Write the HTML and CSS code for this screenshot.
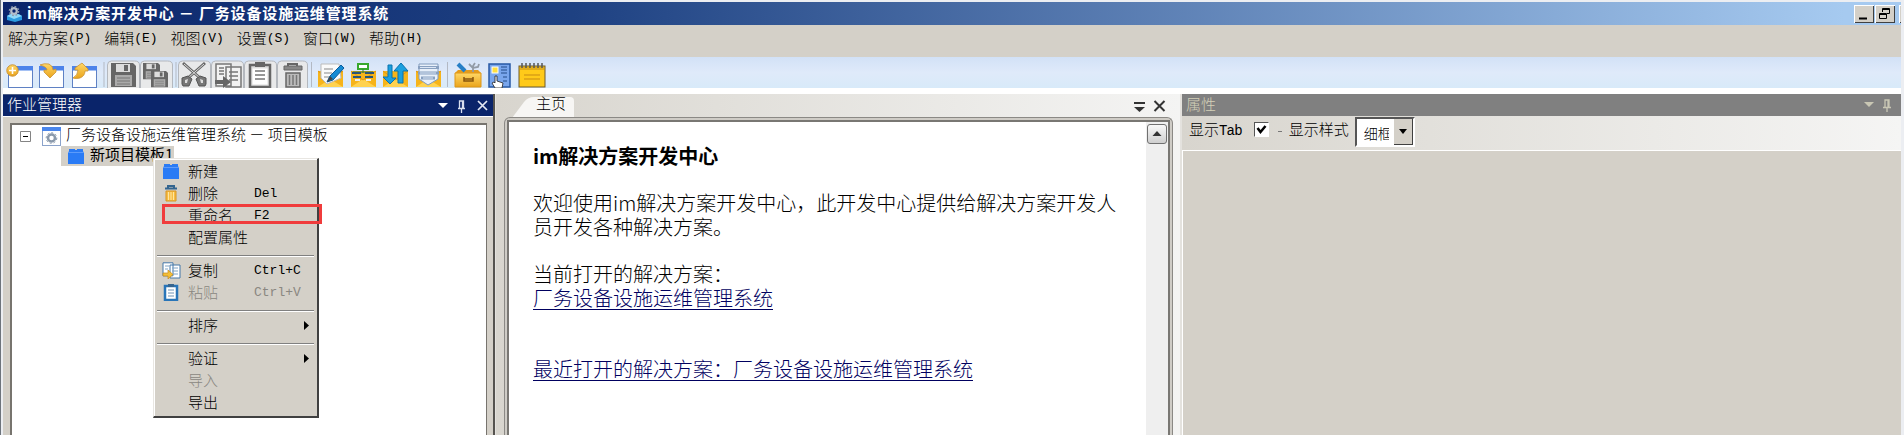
FILE: index.html
```html
<!DOCTYPE html>
<html lang="zh-CN">
<head>
<meta charset="utf-8">
<title>im解决方案开发中心</title>
<link rel="stylesheet" href="styles.css">
</head>
<body>
<div class="window">
  <header class="titlebar">
    <svg class="appicon" width="15" height="16" viewBox="0 0 15 16"><path d="M0 10l3-2h9l3 2v4l-7 2-8-2z" fill="#2b9be0"/><path d="M0 10l7 3 8-3-4-2H4z" fill="#8fd8f8"/><circle cx="7" cy="5" r="2.800" fill="none" stroke="#b4bdca" stroke-width="2.200"/><circle cx="7" cy="5" r="4.600" fill="none" stroke="#8d99aa" stroke-width="1.400" stroke-dasharray="1.800 1.800"/></svg>
    <span class="title-text">im解决方案开发中心 － 厂务设备设施运维管理系统</span>
    <div class="winbtns">
      <span class="winbtn"><svg width="20" height="18"><path d="M5 13.500h8" stroke="#000" stroke-width="2"/></svg></span>
      <span class="winbtn"><svg width="20" height="18" fill="none" stroke="#000"><path d="M7.500 7V3.500h7v5H12M7 4.500h8M4.500 8.500h7v5h-7zM4 9.500h8"/></svg></span>
      <span class="winbtn cut"></span>
    </div>
  </header>
  <nav class="menubar">
    <span class="mi">解决方案<i>(P)</i></span><span class="mi">编辑<i>(E)</i></span><span class="mi">视图<i>(V)</i></span><span class="mi">设置<i>(S)</i></span><span class="mi">窗口<i>(W)</i></span><span class="mi">帮助<i>(H)</i></span>
  </nav>
  <div class="toolbar">
    <svg class="tools" width="560" height="31" viewBox="0 57 560 31">
      <defs>
        <linearGradient id="gold" x1="0" y1="0" x2="0" y2="1"><stop offset="0" stop-color="#ffd766"/><stop offset="1" stop-color="#eaa41c"/></linearGradient>
        <g id="win"><rect x=".5" y=".5" width="24" height="21" fill="#fff" stroke="#5f81c4"/><rect x="0" y="0" width="25" height="4.500" fill="#4d83ea"/></g>
        <g id="floppy"><path d="M0 0h22l3 3v21H0z" fill="#666"/><rect x="5" y="1" width="14" height="8" fill="#ddd"/><rect x="13" y="2" width="4" height="6" fill="#666"/><rect x="4" y="12" width="17" height="11" fill="#aaa"/><path d="M6 15h13M6 18h13M6 21h13" stroke="#777"/></g>
        <g id="env"><path d="M0 8h25v16H0z" fill="#f6b41b"/><path d="M0 24l12-8 13 8z" fill="#ffd24f"/><path d="M0 8l12 9 13-9" fill="none" stroke="#df9413"/></g>
      </defs>
      <use href="#win" x="8" y="66"/><circle cx="12.500" cy="70.500" r="5.700" fill="url(#gold)" stroke="#c99235"/><path d="M12.500 67v7M9 70.500h7" stroke="#fff" stroke-width="1.600"/>
      <use href="#win" x="39" y="66"/><path d="M40 65q4-2 9-1 4 2 4 6l3-1v3l-6 6-6-6v-2h3q0-3-7-5z" fill="url(#gold)" stroke="#c99235" stroke-width=".8"/>
      <use href="#win" x="72" y="66"/><path d="M73 78q5-3 5-8h-3v-2l7-5 6 6v2h-3q0 5-5 7-4 1-7 0z" fill="url(#gold)" stroke="#c99235" stroke-width=".8"/>
      <path d="M104 62v25M176 62v25M311.500 62v25M447.500 62v25" stroke="#b3b9c3"/>
      <g fill="#e8e9ea" stroke="#b4b8be"><path d="M107.500 88V65q0-4 4-4h23q5 0 5 4v23"/><path d="M140.500 88V65q0-4 4-4h23q5 0 5 4v23"/><path d="M178.500 88V65q0-4 4-4h23q5 0 5 4v23"/><path d="M211.500 88V65q0-4 4-4h23q5 0 5 4v23"/><path d="M244.500 88V65q0-4 4-4h23q5 0 5 4v23"/><path d="M277.500 88V65q0-4 4-4h21q5 0 5 4v23"/></g>
      <use href="#floppy" x="111" y="63"/><g transform="translate(143 63) scale(.68)"><use href="#floppy"/></g><g transform="translate(151 71) scale(.68)"><use href="#floppy"/></g>
      <path d="M183 63l17 15M205 63l-17 15" stroke="#666" stroke-width="3"/><path d="M184 64l16 14M204 64l-16 14" stroke="#ddd"/><path d="M182 84v-6l6-2 4 3-3 7h-6zM206 84v-6l-6-2-4 3 3 7h6z" fill="#777" stroke="#555"/><path d="M185 83v-3l3-1-1 4zM203 83v-3l-3-1 1 4z" fill="#ddd"/>
      <g fill="#f2f2f2" stroke="#777" stroke-width="1.500"><path d="M216 64h15v22h-15zM226 67h15v20h-15z"/><path d="M219 68h5M219 71h5M219 74h5M229 72h9M229 76h9M229 80h9"/></g><path d="M215 80h8v-4l8 6-8 6v-4h-8z" fill="#666"/>
      <rect x="250" y="65" width="20" height="22" fill="#ddd" stroke="#666" stroke-width="2.500"/><rect x="255" y="62" width="10" height="5" fill="#666"/><path d="M252.500 68.500h15v16h-15z" fill="#fff"/><path d="M255 71h10M255 75h10M255 79h10" stroke="#777" stroke-width="1.500"/>
      <path d="M288 66v-2h9v2" fill="none" stroke="#666" stroke-width="2"/><path d="M284 66h18v4h-18z" fill="#888" stroke="#666"/><path d="M286 73h14v14h-14z" fill="#bbb" stroke="#666" stroke-width="1.500"/><path d="M289.500 75v10M293 75v10M296.500 75v10" stroke="#777" stroke-width="1.500"/>
      <use href="#env" x="318" y="63"/><path d="M321 64h18l2 14-14 6-6-6z" fill="#fafafa" stroke="#bbb"/><path d="M324 69h9M324 73h8M324 77h5" stroke="#888"/><path d="M327 82l3-6 11-11 3 3-11 12z" fill="#168bd4" stroke="#0b5c9c"/><path d="M327 82l6-3-3-3z" fill="#444"/>
      <use href="#env" x="351" y="63"/><path d="M358 64h10v5h-10z" fill="#fff" stroke="#38a82c" stroke-width="2"/><path d="M363 69v4M353 72h20" stroke="#3d7b35"/><path d="M352 73h9M365 73h9M353 77h8M365 77h8" stroke="#2a5576" stroke-width="2"/><path d="M355 80h5M366 80h5" stroke="#eee" stroke-width="2"/>
      <use href="#env" x="383" y="63"/><path d="M388 65h4v13h4l-6 6-7-7h5z" fill="#1ba0df" stroke="#0b72ad"/><path d="M398 83V71h-4l7-8 7 8h-5v12z" fill="#1ba0df" stroke="#0b72ad"/>
      <use href="#env" x="416" y="63"/><path d="M419 64h19v15l-10 6-9-6z" fill="#e8f0fa" stroke="#819bbd"/><path d="M418 67.500h21M418 73h21M421 78h14" stroke="#88a0c0" stroke-width="3"/><path d="M420 67.500h16M420 73h16M423 78h10" stroke="#dbe6f5"/>
      <path d="M455 73h26v14h-26z" fill="url(#gold)" stroke="#dd9619"/><path d="M455 73l3-3h20l3 3" fill="#e49b1b"/><path d="M464 77v4h9v-4M464 79h9" stroke="#88550d" stroke-width="1.500" fill="none"/><path d="M458 64l7 7" stroke="#267fc6" stroke-width="4"/><path d="M469 64l4 4v4M475 63l-2 3v2l5-1 1-3" stroke="#929ba6" stroke-width="1.800" fill="none"/>
      <rect x="489" y="64" width="21" height="23" fill="#79a6ed" stroke="#2758a4" stroke-width="1.500"/><rect x="492" y="67" width="6" height="6" fill="#ffdf3f" stroke="#fff"/><path d="M501 67h6M501 70h6M501 73h6M503 77h4M503 81h4" stroke="#244c8a"/><path d="M495 88l-3-5 2-1 1 1v-7h2v5l6 2-1 5z" fill="#fff" stroke="#222" stroke-width=".8"/>
      <rect x="519" y="66" width="26" height="21" fill="#ffca19" stroke="#6f5b2a"/><path d="M520 67h24v3h-24z" fill="#dfab1b"/><path d="M522 63v5M526 63v5M530 63v5M534 63v5M538 63v5M542 63v5" stroke="#555" stroke-width="1.500"/><path d="M524 75h16M524 79h16" stroke="#c78b15"/>
    </svg>
  </div>
  <main class="workspace">
    <section class="jobs">
      <div class="phead navy"><span>作业管理器</span>
        <svg width="60" height="22" viewBox="433 94 60 22"><path d="M438 102h10l-5 5z" fill="#fff"/><path d="M458 107.500h7M459.500 107v-7h4v7M462.500 100v7M461.500 108v4" stroke="#d9dfef" fill="none" stroke-width="1.300"/><path d="M478 100l9 9M487 100l-9 9" stroke="#e3e8f4" stroke-width="1.700"/></svg>
      </div>
      <div class="treewrap"><div class="tree">
        <div class="row">
          <svg class="exp" width="11" height="11"><path d="M.5.5h10v10H.5z" fill="#fff" stroke="#848484"/><path d="M3 5.500h5" stroke="#000"/></svg>
          <svg class="proj" width="19" height="19"><rect x=".5" y=".5" width="18" height="18" fill="#fff" stroke="#8ba3cb"/><path d="M0 0h19v4H0z" fill="#4a86ec"/><circle cx="9.500" cy="11" r="3.500" fill="none" stroke="#8a99ab" stroke-width="2.500"/><circle cx="9.500" cy="11" r="5.300" fill="none" stroke="#8a99ab" stroke-dasharray="2 2"/></svg>
          <span class="root">厂务设备设施运维管理系统 － 项目模板</span>
        </div>
        <div class="row2"><svg width="16" height="16"><path d="M1 3V1h6v1h2V1h6v2l1 2v11H0V5z" fill="#2a7bf5"/><path d="M0 4.500h16" stroke="#5c9bfa"/></svg><b>新项目模板1</b></div>
      </div></div>
    </section>
    <section class="doc">
      <div class="tabs">
        <svg class="tab" width="64" height="24" viewBox="0 0 64 24"><path d="M0 24L12 8q4-5 10-5h36q4 0 4 4v17z" fill="#f7f6f4"/></svg>
        <span class="tabname">主页</span>
        <svg class="tabctl" width="40" height="22" viewBox="1130 94 40 22"><path d="M1133 103h11" stroke="#333" stroke-width="2"/><path d="M1133 107h11l-5.500 5z" fill="#333"/><path d="M1153.500 101l10 10M1163.500 101l-10 10" stroke="#333" stroke-width="2"/></svg>
      </div>
      <div class="frame"><div class="page">
        <div class="text">
          <h1>im解决方案开发中心</h1>
          <p class="intro">欢迎使用im解决方案开发中心，此开发中心提供给解决方案开发人<br>员开发各种解决方案。</p>
          <p class="cur">当前打开的解决方案<span class="colon">：</span><br><a>厂务设备设施运维管理系统</a></p>
          <p class="recent"><a>最近打开的解决方案<span class="colon">：</span>厂务设备设施运维管理系统</a></p>
        </div>
        <div class="scroll"><span class="up"><svg width="18" height="18"><path d="M4.500 11l4.500-5 4.500 5z" fill="#333"/></svg></span></div>
      </div></div>
    </section>
    <section class="props">
      <div class="phead gray"><span>属性</span>
        <svg width="60" height="22" viewBox="1841 94 60 22"><path d="M1864 102h10l-5 5z" fill="#c9c7b4"/><path d="M1883 107.500h8M1885 107v-7h4v7M1888 100v7M1887 108v4" stroke="#c9c7b4" fill="none" stroke-width="1.300"/></svg>
      </div>
      <div class="pbar"><span class="lbl">显示<i>Tab</i></span><span class="check"><svg width="13" height="13"><path d="M2.500 5l3 4 5-6" stroke="#000" stroke-width="2.500" fill="none"/></svg></span><span class="dash"></span><span class="lbl2">显示样式</span>
        <span class="combo"><span class="val">细框</span><span class="drop"><svg width="18" height="24"><path d="M5 10h8l-4 5z"/></svg></span></span></div>
      <div class="pbody"></div>
    </section>
  </main>
</div>
<div class="ctx">
  <div class="it"><svg class="ic" width="16" height="16"><path d="M1 3V1h6v1h2V1h6v2l1 2v11H0V5z" fill="#2a7bf5"/><path d="M0 4.500h16" stroke="#5c9bfa"/></svg>新建</div>
  <div class="it"><svg class="ic" width="16" height="17"><path d="M2 3.500h12M5 3V1h6v2" stroke="#34658f" stroke-width="2" fill="none"/><path d="M3 6h10v10H3z" fill="#f6bd43" stroke="#d89422"/><path d="M5.500 7v8M8 7v8M10.500 7v8" stroke="#ffe5a0"/></svg>删除<i>Del</i></div>
  <div class="it">重命名<i>F2</i></div>
  <div class="it">配置属性</div>
  <hr>
  <div class="it"><svg class="ic wide" width="19" height="17"><path d="M1 .8h10v13H1zM8 3h10v13H8z" fill="#fff" stroke="#4377a8"/><path d="M3 4h4M3 7h3M10 6h6M10 9h6M11 12h5" stroke="#7fa3c5"/><path d="M1 11h5V8l5 4.500L6 17v-3H1z" fill="#f4bf37" stroke="#c58b1c" stroke-width=".7"/></svg>复制<i>Ctrl+C</i></div>
  <div class="it off"><svg class="ic" width="17" height="17"><path d="M2 2h12v14H2z" fill="#fff" stroke="#2975b8" stroke-width="2.500"/><path d="M5 0h6v3H5z" fill="#37658e"/><path d="M5 6h6M5 9h6M5 12h6" stroke="#6c92b5"/></svg>粘贴<i>Ctrl+V</i></div>
  <hr>
  <div class="it">排序<svg class="arr" width="5" height="9"><path d="M0 0l5 4.500L0 9z"/></svg></div>
  <hr>
  <div class="it">验证<svg class="arr" width="5" height="9"><path d="M0 0l5 4.500L0 9z"/></svg></div>
  <div class="it off">导入</div>
  <div class="it">导出</div>
</div>
<div class="mark"></div>
</body>
</html>
```
FILE: styles.css
```css
* { box-sizing: border-box; }
body { margin: 0; width: 1904px; height: 435px; overflow: hidden; background: #d4d0c8; font: 300 15px/18px "Noto Sans CJK SC", sans-serif; color: #000; }
i { font-style: normal; font-family: "Liberation Mono", monospace; font-size: 13px; }
svg { display: block; flex: none; }
.window { height: 435px; display: flex; flex-direction: column; padding: 2px 3px 0 2px; background: #eceef2; border-left: 1px solid #6d747c; }
.titlebar { height: 23px; flex: none; display: flex; align-items: center; background: linear-gradient(90deg, #0a246a 0%, #1e4182 30%, #a6caf0 97%); color: #fff; padding-left: 4px; }
.title-text { margin: -2px 0 0 5px; font-weight: 700; font-size: 15px; letter-spacing: .85px; white-space: nowrap; }
.winbtns { margin-left: auto; width: 47px; display: flex; gap: 1px; overflow: hidden; }
.winbtn { width: 20px; height: 18px; flex: none; background: #d4d0c8; box-shadow: inset 1px 1px #fff, inset -1px -1px #404040; }
.cut { margin-left: 3px; }
.menubar { height: 32px; flex: none; background: #d4d0c8; padding: 4px 5px 0; display: flex; gap: 12.8px; }
.mi { white-space: nowrap; display: flex; align-items: center; height: 18px; }
.mi i { padding-top: 2px; }
.toolbar { height: 31px; flex: none; background: linear-gradient(#d2e1f6, #dfeafa 50%, #d8eaf9); }
.tools { margin-left: -3px; }
.workspace { flex: 1; display: flex; border-top: 6px solid #fff; background: #e4e2de; min-height: 0; }
.jobs { width: 492px; display: flex; flex-direction: column; background: #d4d0c8; border-right: 2px solid #55534f; }
.phead { height: 22px; flex: none; display: flex; justify-content: space-between; align-items: center; padding-left: 4px; }
.phead span { margin-top: -3px; }
.navy { background: #0a246a; color: #fff; border-top: 1px solid #4d5d85; }
.gray { background: #808080; color: #d4d0b8; }
.treewrap { flex: 1; padding: 6px 6px 0 7px; border-top: 1px solid #fff; }
.tree { height: 100%; background: #fff; border: 2px solid #77746e; border-width: 2px 1px 0 2px; padding: 1px 0 0 8px; }
.row { display: flex; align-items: center; height: 20px; white-space: nowrap; }
.exp { margin-top: 1px; }
.proj { margin: 0 5px 0 11px; }
.root { margin-top: -4px; }
.row2 { display: flex; align-items: center; width: 113px; height: 20px; margin-left: 41px; padding-left: 7px; gap: 6px; background: #d4d0c8; white-space: nowrap; }
.row2 b { margin-top: -4px; }
.doc { width: 684px; display: flex; flex-direction: column; background: linear-gradient(90deg, #d8d5ce, #f4f4f3); margin-left: 1px; }
.tabs { height: 23px; flex: none; display: flex; padding-left: 16px; }
.tabname { margin-left: -40px; }
.tabctl { margin-left: auto; margin-right: 9px; }
.frame { flex: 1; margin: 0 7px 0 8px; border: 1px solid #8b8985; border-bottom: 0; border-radius: 6px 6px 0 0; padding: 2px 2px 0; background: #cfccc6; min-height: 0; }
.page { height: 100%; display: flex; background: #fff; border: 2px solid #797773; border-bottom: 0; }
.text { flex: 1; padding: 22px 0 0 24px; white-space: nowrap; font-size: 20px; line-height: 24px; }
.text h1 { margin: 0 0 23px; font-size: 20px; line-height: 24px; }
.text p { margin: 0; }
.text .intro { margin-bottom: 23px; }
.text .recent { margin-top: 47px; }
.text a { color: #00005f; text-decoration: underline; text-underline-offset: 3px; text-decoration-thickness: 1px; }
.colon { font-family: "Noto Sans CJK TC", sans-serif; }
.colon { font-feature-settings: normal; }
.scroll { width: 22px; background: #efefef; padding: 2px 1px; }
.up { display: block; width: 20px; height: 20px; border: 1px solid #707070; border-radius: 3px; background: linear-gradient(#f8f8f8, #cfcfcf); }
.props { flex: 1; margin-left: 2px; display: flex; flex-direction: column; }
.pbar { height: 34px; flex: none; display: flex; background: linear-gradient(90deg, #d8d5ce, #f5f5f4); padding-left: 7px; white-space: nowrap; }
.lbl, .lbl2 { padding-top: 4px; }
.lbl i { font-size: 14px; letter-spacing: -.8px; }
.check { width: 15px; height: 15px; margin: 6px 0 0 12px; background: #fff; border: 1px solid #fff; border-top-color: #555; border-left-color: #555; }
.dash { width: 4px; height: 1px; margin: 15px 7px 0 9px; background: #777; }
.combo { width: 60px; height: 30px; margin: 1px 0 0 6px; background: #fff; border: 2px solid #fff; border-top-color: #555; border-left-color: #555; display: flex; }
.val { width: 25px; margin: 4px 0 0 7px; overflow: hidden; font-size: 14px; line-height: 20px; }
.drop { margin-left: auto; width: 19px; background: #d4d0c8; border-right: 1px solid #404040; border-bottom: 1px solid #404040; }
.pbody { flex: 1; background: #d4d0c8; border-top: 1px solid #fff; border-left: 1px solid #fff; }
.ctx { position: absolute; left: 153px; top: 158px; width: 166px; height: 260px; background: #d4d0c8; border: 1px solid #e8e6e2; border-right: 2px solid #404040; border-bottom: 2px solid #404040; box-shadow: inset 1px 1px #fff; padding: 1px 3px; }
.it { position: relative; height: 22px; line-height: 21px; padding-left: 31px; white-space: nowrap; }
.it i { position: absolute; left: 97px; top: 1px; }
.ic { position: absolute; left: 6px; top: 3px; }
.ic.wide { left: 5px; }
.arr { position: absolute; right: 5px; top: 7px; }
.off { color: #8a8781; }
.ctx hr { height: 2px; border: 0; border-top: 1px solid #808080; background: #fff; margin: 7px 0 2px; }
.mark { position: absolute; left: 162px; top: 204px; width: 160px; height: 20px; border: 3px solid #f03c3c; }
```
